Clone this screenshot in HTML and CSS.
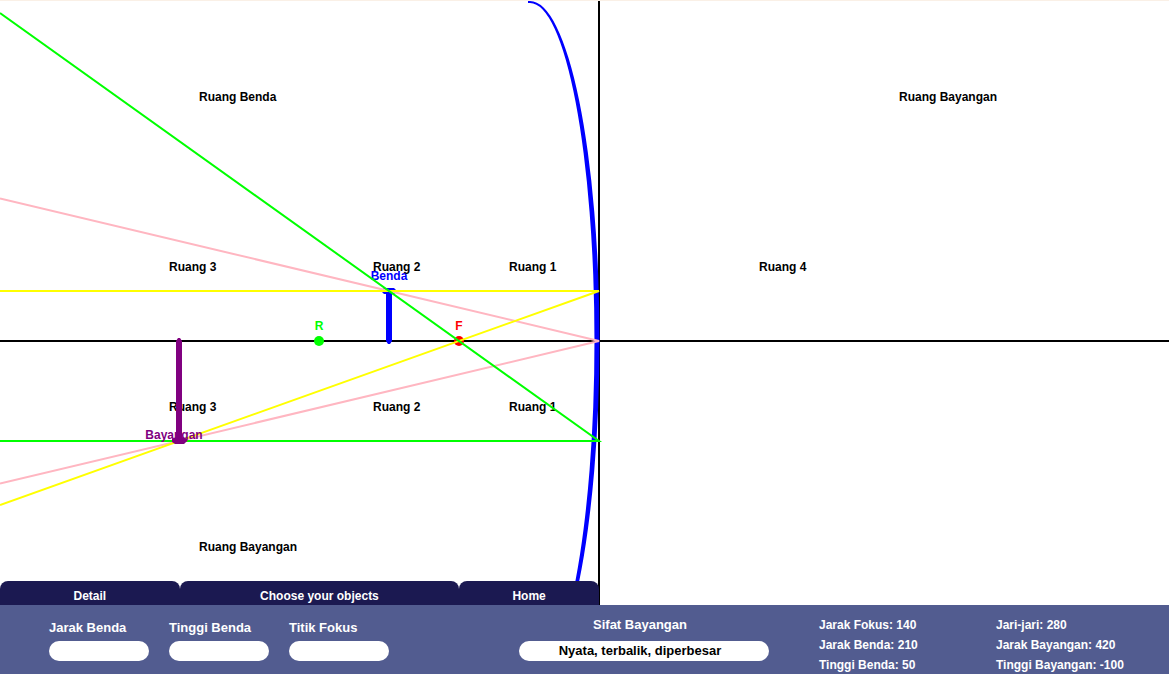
FILE: index.html
```html
<!DOCTYPE html>
<html lang="id">
<head>
<meta charset="utf-8">
<meta name="viewport" content="width=device-width, initial-scale=1">
<title>Cermin Cekung</title>
<link rel="stylesheet" href="styles.css">
</head>
<body>
<main class="stage">
  <svg class="diagram" viewBox="0 0 1169 604" preserveAspectRatio="xMinYMin slice" role="img" aria-label="Diagram sinar cermin cekung">
    <g class="axes">
      <path d="M0 340H1169"/>
      <path d="M599 0V604"/>
    </g>
    <path class="mirror" d="M528 0H530A69.500 340 0 0 1 530 680V678A64.500 338 0 0 0 530 2H528Z"/>
    <g class="zone">
      <text x="199" y="100">Ruang Benda</text>
      <text x="899" y="100">Ruang Bayangan</text>
      <text x="199" y="550">Ruang Bayangan</text>
      <text x="169" y="270">Ruang 3</text>
      <text x="373" y="270">Ruang 2</text>
      <text x="509" y="270">Ruang 1</text>
      <text x="759" y="270">Ruang 4</text>
      <text x="169" y="410">Ruang 3</text>
      <text x="373" y="410">Ruang 2</text>
      <text x="509" y="410">Ruang 1</text>
    </g>
    <g class="point-r">
      <circle cx="319" cy="340" r="5"/>
      <text x="319" y="329">R</text>
    </g>
    <g class="point-f">
      <circle cx="459" cy="340" r="5"/>
      <text x="459" y="329">F</text>
    </g>
    <g class="object">
      <text x="389" y="279">Benda</text>
      <path d="M386 340V293H384L382 291V289L384 287H394L396 289V291L394 293H392V340L390 343H388Z"/>
    </g>
    <g class="rays">
      <path class="ray-center" d="M0 197.400L599 340L0 482.600"/>
      <path class="ray-parallel" d="M0 290H599L0 504"/>
      <path class="ray-focal" d="M0 12L599 440H0"/>
    </g>
    <g class="image">
      <text x="174" y="438">Bayangan</text>
      <path d="M176 340L178 337H180L182 340V436L187 438V440L184 443H175L172 441V438L176 436Z"/>
    </g>
  </svg>
  <nav class="tabs">
    <button class="tab" type="button">Detail</button>
    <button class="tab" type="button">Choose your objects</button>
    <button class="tab" type="button">Home</button>
  </nav>
</main>
<footer class="panel">
  <form class="fields">
    <label class="field">Jarak Benda<input class="pill" type="text"></label>
    <label class="field">Tinggi Benda<input class="pill" type="text"></label>
    <label class="field">Titik Fokus<input class="pill" type="text"></label>
  </form>
  <section class="nature">
    <label class="caption" for="sifat">Sifat Bayangan</label>
    <input class="pill" id="sifat" type="text" value="Nyata, terbalik, diperbesar" readonly>
  </section>
  <section class="values">
    <p>Jarak Fokus: 140</p>
    <p>Jarak Benda: 210</p>
    <p>Tinggi Benda: 50</p>
  </section>
  <section class="values">
    <p>Jari-jari: 280</p>
    <p>Jarak Bayangan: 420</p>
    <p>Tinggi Bayangan: -100</p>
  </section>
</footer>
</body>
</html>
```
FILE: styles.css
```css
* {
  box-sizing: border-box;
}

body {
  margin: 0;
  min-height: 100vh;
  display: flex;
  flex-direction: column;
  background: #fff;
  color: #000;
  font: bold 12px/20px "Liberation Sans", Arial, sans-serif;
}

button,
input {
  font: inherit;
}

.stage {
  position: relative;
  flex: 1;
  display: flex;
  border-top: 1px solid #faf0e6;
}

.diagram {
  display: block;
  width: 100%;
  flex: 1;
}

.axes path {
  stroke: #000;
  stroke-width: 2;
  shape-rendering: crispEdges;
}

.mirror {
  fill: #00f;
}

.rays path {
  fill: none;
  stroke-width: 2;
}

.rays .ray-center {
  stroke: #ffb6c1;
}

.rays .ray-parallel {
  stroke: #ff0;
}

.rays .ray-focal {
  stroke: #0f0;
}

.point-r,
.point-f,
.object,
.image {
  text-anchor: middle;
}

.point-r {
  fill: #0f0;
}

.point-f {
  fill: #f00;
}

.object {
  fill: #00f;
}

.image {
  fill: #800080;
}

.tabs {
  position: absolute;
  left: 0;
  bottom: 0;
  width: 599px;
  max-width: 100%;
  display: grid;
  grid-template-columns: 9fr 14fr 7fr;
}

.tab {
  height: 24px;
  padding: 5px 0 0;
  border: 0;
  border-radius: 8px 8px 0 0;
  background: #1b1951;
  color: #fff;
}

.panel {
  display: grid;
  grid-template-columns: 470fr 300fr 177fr 173fr;
  padding-left: 49px;
  background: #525c90;
  color: #fff;
}

.fields {
  display: flex;
  gap: 20px;
  padding-top: 13px;
  font-size: 13px;
}

.field {
  width: 100px;
}

.pill {
  display: block;
  width: 100%;
  height: 20px;
  margin-top: 3px;
  padding: 0 10px;
  border: 0;
  border-radius: 10px;
  background: #fff;
  color: #000;
}

.nature {
  width: 250px;
  padding-top: 10px;
  font-size: 13px;
  text-align: center;
}

.caption {
  display: block;
  padding-right: 8px;
}

.nature .pill {
  margin-top: 6px;
  padding-right: 18px;
  text-align: center;
}

.values {
  padding-top: 10px;
}

.values p {
  margin: 0;
}
```
